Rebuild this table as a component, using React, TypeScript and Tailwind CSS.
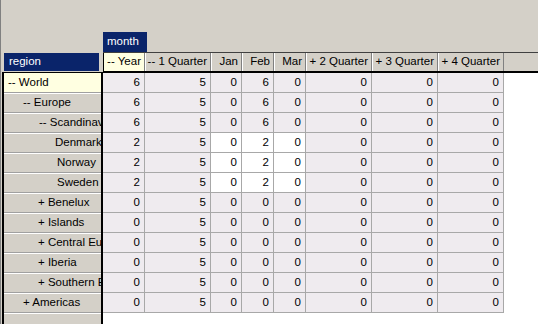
const columns = [
  { label: "-- Year", w: "w-[42px]", selected: true },
  { label: "-- 1 Quarter", w: "w-[66px]" },
  { label: "Jan", w: "w-[31px]" },
  { label: "Feb", w: "w-[32px]" },
  { label: "Mar", w: "w-[32px]" },
  { label: "+ 2 Quarter", w: "w-[66px]" },
  { label: "+ 3 Quarter", w: "w-[66px]" },
  { label: "+ 4 Quarter", w: "w-[66px]" },
]

const rows = [
  { label: "-- World", pad: "pl-[4px]", vals: [6, 5, 0, 6, 0, 0, 0, 0], selected: true },
  { label: "-- Europe", pad: "pl-[19px]", vals: [6, 5, 0, 6, 0, 0, 0, 0] },
  { label: "-- Scandinavia", pad: "pl-[35px]", vals: [6, 5, 0, 6, 0, 0, 0, 0] },
  { label: "Denmark", pad: "pl-[51px]", vals: [2, 5, 0, 2, 0, 0, 0, 0], leaf: true },
  { label: "Norway", pad: "pl-[53px]", vals: [2, 5, 0, 2, 0, 0, 0, 0], leaf: true },
  { label: "Sweden", pad: "pl-[53px]", vals: [2, 5, 0, 2, 0, 0, 0, 0], leaf: true },
  { label: "+ Benelux", pad: "pl-[34px]", vals: [0, 5, 0, 0, 0, 0, 0, 0] },
  { label: "+ Islands", pad: "pl-[34px]", vals: [0, 5, 0, 0, 0, 0, 0, 0] },
  { label: "+ Central Europe", pad: "pl-[34px]", vals: [0, 5, 0, 0, 0, 0, 0, 0] },
  { label: "+ Iberia", pad: "pl-[34px]", vals: [0, 5, 0, 0, 0, 0, 0, 0] },
  { label: "+ Southern Europe", pad: "pl-[34px]", vals: [0, 5, 0, 0, 0, 0, 0, 0] },
  { label: "+ Americas", pad: "pl-[19px]", vals: [0, 5, 0, 0, 0, 0, 0, 0] },
]

export default function App() {
  return (
    <div className="w-[538px] h-[324px] bg-[#d4d0c8] border-l border-[#808080] overflow-hidden flex flex-col font-['Liberation_Sans',sans-serif] text-[11.5px] leading-none text-black">
      {/* top empty toolbar area */}
      <div className="h-[32px] shrink-0" />

      {/* column dimension tab */}
      <div className="h-[20px] shrink-0 flex pl-[102px]">
        <div className="w-[44px] h-[20px] bg-[#0a246a] text-white flex items-center pl-[4px]">month</div>
      </div>

      <div className="flex flex-1 min-h-0">
        {/* row headers */}
        <div className="w-[102px] shrink-0 flex flex-col">
          <div className="h-[20px] shrink-0 pl-[3px] pt-[1px]">
            <div className="w-[95px] h-[18px] bg-[#0a246a] text-white flex items-center pl-[5px]">region</div>
          </div>
          <div className="ml-[1px] flex-1 flex flex-col border-l-2 border-t border-r-2 border-black">
            {rows.map((r) => (
              <div
                key={r.label}
                className={`h-[20px] shrink-0 flex items-center overflow-hidden whitespace-nowrap border-t border-b ${r.pad} ${
                  r.selected ? "bg-[#ffffe1] border-t-[#ffffe1] border-b-[#a0a0a0]" : "bg-[#d4d0c8] border-t-white border-b-[#a0a0a0]"
                }`}
              >
                {r.label}
              </div>
            ))}
            <div className="flex-1 bg-[#d4d0c8] border-t border-white" />
          </div>
        </div>

        {/* column headers + values */}
        <div className="flex-1 flex flex-col bg-white">
          <div className="h-[21px] shrink-0 flex bg-[#d4d0c8] border-t border-[#404040] border-b-2 border-b-black">
            {columns.map((c) => (
              <div
                key={c.label}
                className={`${c.w} shrink-0 h-full border-r border-[#808080] flex items-center justify-end pr-[3px] whitespace-nowrap ${
                  c.selected ? "bg-[#ffffe1] shadow-[inset_1px_0_0_#000]" : "shadow-[inset_1px_0_0_#fff]"
                }`}
              >
                {c.label}
              </div>
            ))}
          </div>
          {rows.map((r) => (
            <div key={r.label} className="h-[20px] shrink-0 flex">
              {r.vals.map((v, i) => (
                <div
                  key={i}
                  className={`${columns[i].w} shrink-0 h-[20px] border-r border-b border-[#a8a8a8] flex items-center justify-end pr-[4px] ${
                    r.leaf && i >= 2 && i <= 4 ? "bg-white" : "bg-[#efebef]"
                  }`}
                >
                  {v}
                </div>
              ))}
            </div>
          ))}
        </div>
      </div>
    </div>
  )
}
